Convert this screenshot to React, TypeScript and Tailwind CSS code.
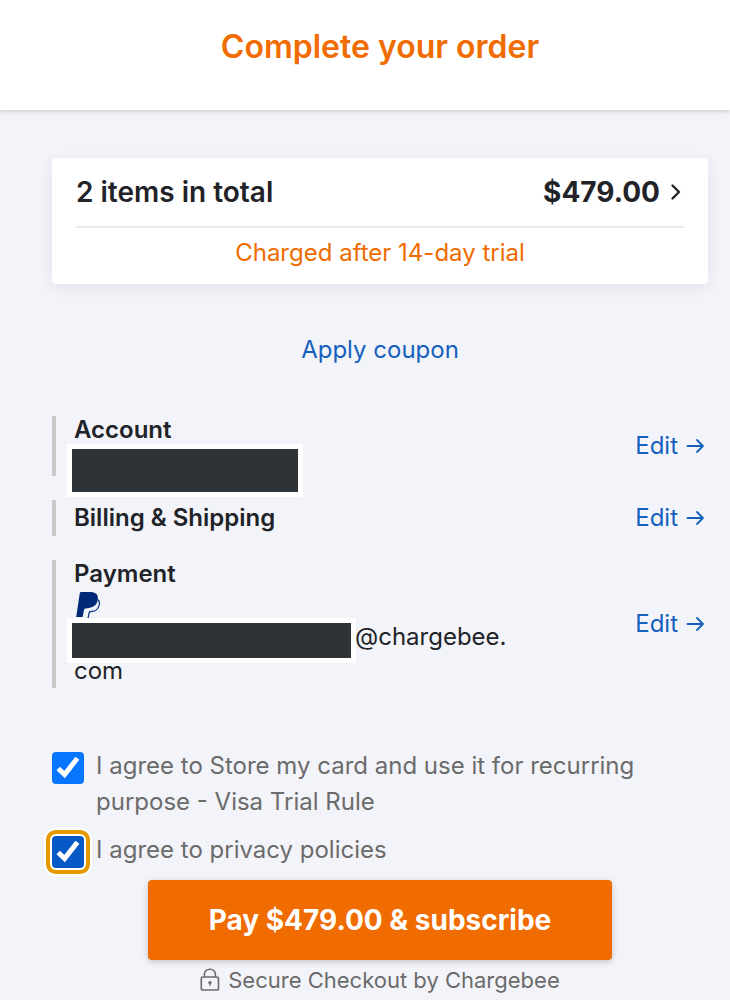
import { useState } from 'react';
import type { ReactNode } from 'react';

function ArrowIcon() {
    return (
        <svg className="w-5 h-5" viewBox="0 0 20 20" fill="none" stroke="currentColor" strokeWidth="1.8" strokeLinecap="round" strokeLinejoin="round" aria-hidden="true">
            <path d="M1.5 10H17M11 4L17 10L11 16" />
        </svg>
    );
}

function PaypalIcon() {
    return (
        <svg className="w-6 h-7" viewBox="0 0 24 28" aria-label="PayPal" role="img">
            <path fill="#002a77" d="M3.8 1.1Q4 0 5.2 0H13.8C19.4 0 22.4 2.5 21.9 7.1C21.2 12.8 18 15.4 13 16L9.4 16.4Q8.3 16.6 8 18L6.6 25H.2Z" />
            <path fill="none" stroke="#123d87" strokeWidth="1.3" d="M22.2 7.8C23.5 9.3 23.7 11.2 23.1 13.4C22 17.6 19.5 19.4 15.6 19.5H14.6Q13.4 19.6 13.1 20.9L12 26.6" />
        </svg>
    );
}

function LockIcon() {
    return (
        <svg className="w-5 h-6" viewBox="0 0 20 24" fill="none" stroke="currentColor" strokeWidth="1.6" aria-hidden="true">
            <rect x="1.3" y="9" width="17.2" height="13" rx="1.8" />
            <path d="M4.4 9V6.6C4.4 3.4 6.8 1.2 9.9 1.2C13 1.2 15.4 3.4 15.4 6.6V9" />
            <circle cx="10" cy="14.6" r="1.7" fill="currentColor" stroke="none" />
            <path d="M10 15V18" strokeWidth="1.2" />
        </svg>
    );
}

function Redacted({ className }: { className: string }) {
    return <span className={`absolute border-[5px] border-white bg-[#2d3337] ${className}`} />;
}

function Section({ title, className, children }: { title: string; className?: string; children?: ReactNode }) {
    return (
        <section className={`flex items-center justify-between border-l-4 border-[#c9c9c9] pl-[18px] pr-0.5 ${className ?? ''}`}>
            <div className="relative">
                <h2 className="text-2xl leading-7 font-semibold">{title}</h2>
                {children}
            </div>
            <a href="#edit" className="flex items-center gap-2 text-2xl leading-7 text-[#1560bd]">
                Edit <ArrowIcon />
            </a>
        </section>
    );
}

function Consent({ id, label, focused }: { id: string; label: string; focused?: boolean }) {
    const [checked, setChecked] = useState(true);
    return (
        <div className="flex items-start gap-3">
            <span className="relative mt-1 w-8 h-8 shrink-0">
                <input
                    id={id}
                    type="checkbox"
                    checked={checked}
                    onChange={e => setChecked(e.target.checked)}
                    className={`block w-8 h-8 appearance-none rounded outline-none ${focused
                        ? 'bg-white checked:bg-[#0759c7] shadow-[0_0_0_2px_#fff,0_0_0_6px_#e69900,0_0_0_8px_#fff]'
                        : 'bg-white checked:bg-[#0875ff]'}`}
                />
                {checked && (
                    <svg className="absolute inset-0 pointer-events-none" viewBox="0 0 32 32" fill="none" stroke="#fff" strokeWidth="5" aria-hidden="true">
                        <path d="M6.2 16.5L12.6 22.5L25.4 6.2" />
                    </svg>
                )}
            </span>
            <label htmlFor={id} className="text-2xl leading-9 text-[#6b6b6b]">{label}</label>
        </div>
    );
}

export default function App() {
    return (
        <div className="min-h-screen bg-[#f3f4f9] text-[#212328] font-['Inter','Liberation_Sans',sans-serif]">
            {/* Header */}
            <header className="bg-white pt-[23px] pb-[39px] pl-[52px] pr-[22px] shadow-[0_2px_4px_rgba(0,0,0,0.14)]">
                <h1 className="text-center text-[32px] leading-[48px] font-semibold text-[#f06c00]">Complete your order</h1>
            </header>

            <main className="pl-[52px] pr-[22px] pt-12">
                {/* Order summary */}
                <div className="rounded bg-white px-6 shadow-[0_4px_16px_rgba(0,0,0,0.08)]">
                    <button type="button" className="flex w-full items-center justify-between border-b-2 border-[#ebebeb] pt-4 pb-4 text-[28px] leading-9">
                        <span className="font-semibold">2 items in total</span>
                        <span className="flex items-center gap-2 font-bold">
                            $479.00
                            <svg className="w-4 h-5" viewBox="0 0 16 20" fill="none" stroke="currentColor" strokeWidth="2.4" strokeLinecap="round" strokeLinejoin="round" aria-hidden="true">
                                <path d="M4.5 3.5L11 10L4.5 16.5" />
                            </svg>
                        </span>
                    </button>
                    <p className="pt-2 pb-3.5 text-center text-2xl leading-[34px] text-[#f06c00]">Charged after 14-day trial</p>
                </div>

                <div className="mt-12 text-center">
                    <button type="button" className="text-2xl leading-9 text-[#1560bd]">Apply coupon</button>
                </div>

                {/* Details */}
                <div className="mt-12 flex flex-col gap-6">
                    <Section title="Account" className="h-[60px]">
                        <div className="h-8">
                            <Redacted className="-left-[7px] top-7 w-[236px] h-[53px]" />
                        </div>
                    </Section>
                    <Section title="Billing & Shipping" className="h-9" />
                    <Section title="Payment">
                        <div className="pt-1 pl-0.5"><PaypalIcon /></div>
                        <div className="text-2xl leading-[34px]">
                            <p className="pl-[281px]">
                                @chargebee.
                                <Redacted className="-left-[7px] top-[58px] w-[289px] h-[45px]" />
                            </p>
                            <p>com</p>
                        </div>
                    </Section>
                </div>

                {/* Consents */}
                <div className="mt-[60px] flex flex-col gap-3">
                    <Consent id="store-card" label="I agree to Store my card and use it for recurring purpose - Visa Trial Rule" />
                    <Consent id="privacy" label="I agree to privacy policies" focused />
                </div>

                <div className="mt-3 px-24">
                    <button type="button" className="block h-20 w-full rounded bg-[#f06c00] text-[28px] font-bold text-white shadow-[0_2px_6px_rgba(0,0,0,0.2)]">
                        Pay $479.00 & subscribe
                    </button>
                </div>
                <p className="mt-1 flex items-center justify-center gap-2 text-[22px] leading-8 text-[#6b6b6b]">
                    <LockIcon />
                    Secure Checkout by Chargebee
                </p>
            </main>
        </div>
    );
}
